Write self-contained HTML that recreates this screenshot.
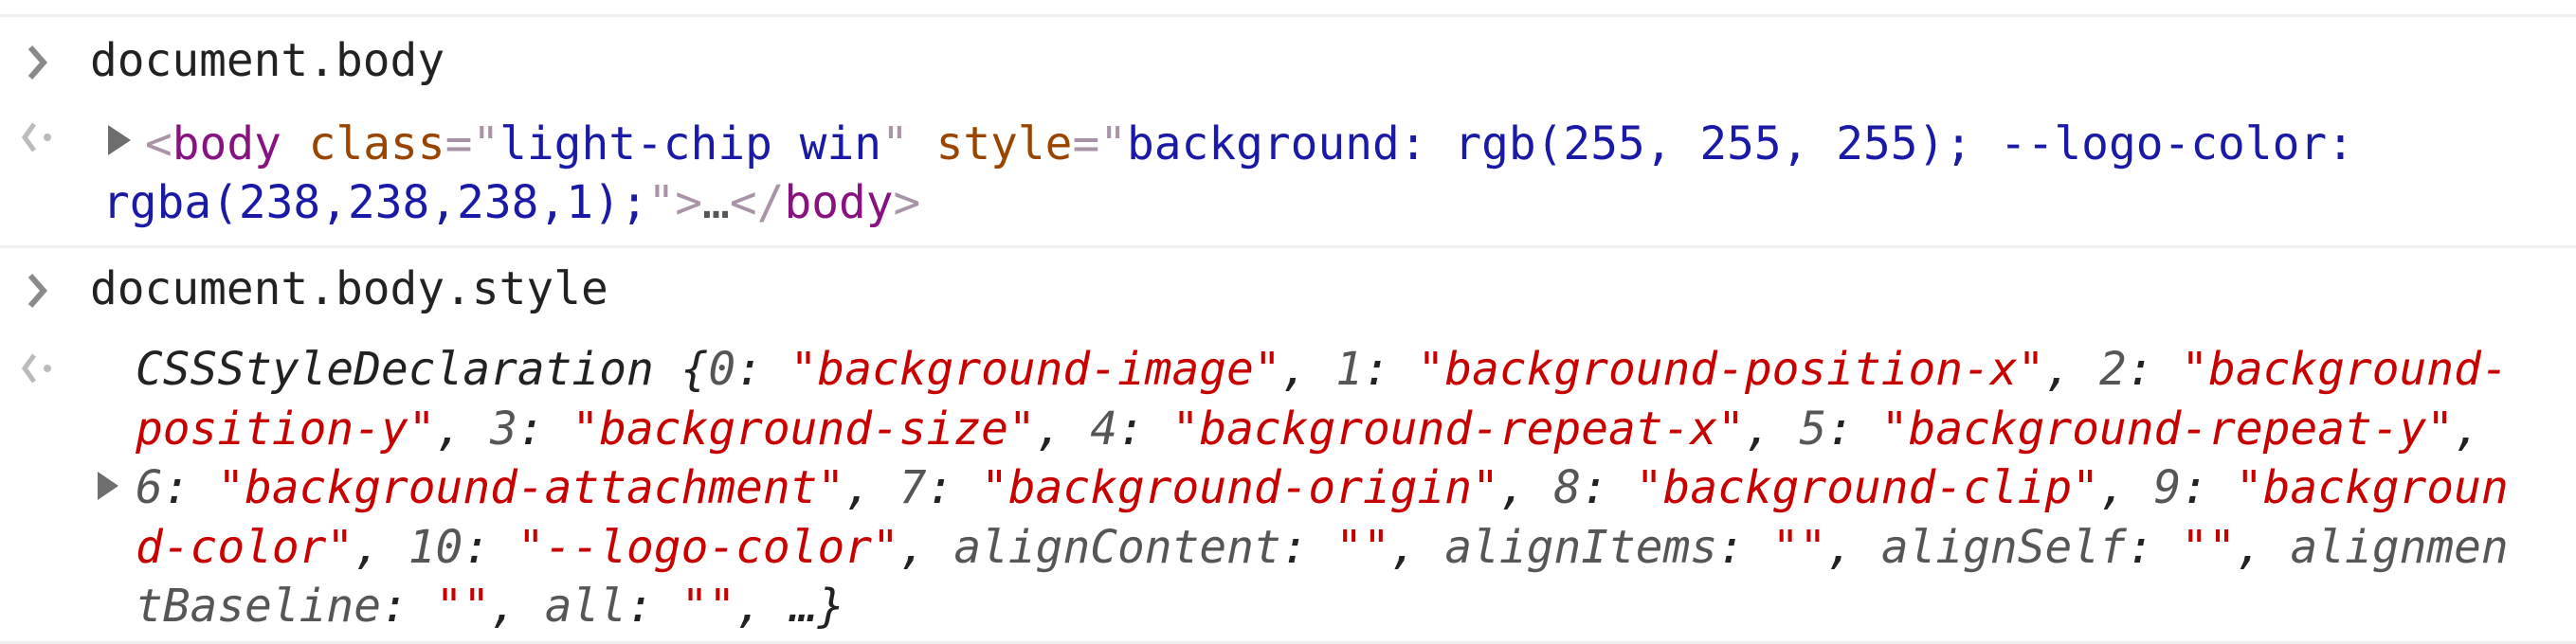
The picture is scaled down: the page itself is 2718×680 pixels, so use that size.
<!DOCTYPE html>
<html><head><meta charset="utf-8"><style>
html,body{margin:0;padding:0;background:#fff;width:2718px;height:680px;overflow:hidden;position:relative}
.l{position:absolute;white-space:pre;font-family:"DejaVu Sans Mono","Liberation Mono",monospace;font-size:47.8px;line-height:62.5px;color:#222}
.sep{position:absolute;left:0;width:2718px;height:3px;background:#efefef}
.t{color:#881280}.a{color:#994500}.v{color:#1a1aa6}.p{color:#a894a6}
.i{font-style:italic}.s{color:#c80000}.k{color:#565656}
svg{position:absolute}
</style></head><body>
<div class="sep" style="top:15px"></div>
<div class="sep" style="top:259px"></div>
<div class="sep" style="top:677px"></div>

<svg style="left:26px;top:46px" width="30" height="40" viewBox="0 0 30 40"><path d="M6 4 L20 20 L6 36" fill="none" stroke="#8a8a8a" stroke-width="6"/></svg>
<div class="l" style="left:95px;top:34px">document.body</div>

<svg style="left:22px;top:128px" width="36" height="36" viewBox="0 0 36 36"><path d="M14 3 L4 17 L14 31" fill="none" stroke="#bbb" stroke-width="5"/><circle cx="28" cy="17" r="4" fill="#bbb"/></svg>
<svg style="left:114px;top:132px" width="26" height="34" viewBox="0 0 26 34"><path d="M0 0 L24 16 L0 32 Z" fill="#6e6e6e"/></svg>
<div class="l" style="left:153px;top:122px"><span class="p">&lt;</span><span class="t">body</span> <span class="a">class</span><span class="p">="</span><span class="v">light-chip win</span><span class="p">"</span> <span class="a">style</span><span class="p">="</span><span class="v">background: rgb(255, 255, 255); --logo-color:</span></div>
<div class="l" style="left:108px;top:184px"><span class="v">rgba(238,238,238,1);</span><span class="p">"&gt;</span><span class="k">…</span><span class="p">&lt;/</span><span class="t">body</span><span class="p">&gt;</span></div>

<svg style="left:26px;top:287px" width="30" height="40" viewBox="0 0 30 40"><path d="M6 4 L20 20 L6 36" fill="none" stroke="#8a8a8a" stroke-width="6"/></svg>
<div class="l" style="left:95px;top:275px">document.body.style</div>

<svg style="left:22px;top:372px" width="36" height="36" viewBox="0 0 36 36"><path d="M14 3 L4 17 L14 31" fill="none" stroke="#bbb" stroke-width="5"/><circle cx="28" cy="17" r="4" fill="#bbb"/></svg>
<div class="l i" style="left:143px;top:360px">CSSStyleDeclaration {<span class="k">0</span>: <span class="s">"background-image"</span>, <span class="k">1</span>: <span class="s">"background-position-x"</span>, <span class="k">2</span>: <span class="s">"background-</span></div>
<div class="l i" style="left:143px;top:422.5px"><span class="s">position-y"</span>, <span class="k">3</span>: <span class="s">"background-size"</span>, <span class="k">4</span>: <span class="s">"background-repeat-x"</span>, <span class="k">5</span>: <span class="s">"background-repeat-y"</span>,</div>
<svg style="left:103px;top:498px" width="24" height="32" viewBox="0 0 24 32"><path d="M0 0 L22 15 L0 30 Z" fill="#6e6e6e"/></svg>
<div class="l i" style="left:143px;top:485px"><span class="k">6</span>: <span class="s">"background-attachment"</span>, <span class="k">7</span>: <span class="s">"background-origin"</span>, <span class="k">8</span>: <span class="s">"background-clip"</span>, <span class="k">9</span>: <span class="s">"backgroun</span></div>
<div class="l i" style="left:143px;top:547.5px"><span class="s">d-color"</span>, <span class="k">10</span>: <span class="s">"--logo-color"</span>, <span class="k">alignContent</span>: <span class="s">""</span>, <span class="k">alignItems</span>: <span class="s">""</span>, <span class="k">alignSelf</span>: <span class="s">""</span>, <span class="k">alignmen</span></div>
<div class="l i" style="left:143px;top:610px"><span class="k">tBaseline</span>: <span class="s">""</span>, <span class="k">all</span>: <span class="s">""</span>, …}</div>
</body></html>
